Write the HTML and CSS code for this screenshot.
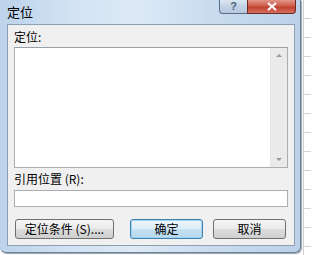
FILE: index.html
```html
<!DOCTYPE html>
<html>
<head>
<meta charset="utf-8">
<link rel="stylesheet" href="styles.css">
</head>
<body>
<div class="page">
  <div class="dialog">
    <div class="titlebar">
      <span class="title">定位</span>
      <div class="caption-btns">
        <div class="cbtn help">?</div>
        <div class="cbtn close">
          <svg width="12" height="9" viewBox="0 0 12 9"><path d="M2 1 L10 8 M10 1 L2 8" stroke="#fff" stroke-width="2.2" fill="none"/></svg>
        </div>
      </div>
    </div>
    <div class="client">
      <div class="label">定位:</div>
      <div class="listbox">
        <div class="list-area"></div>
        <div class="vscroll">
          <span class="arrow up"></span>
          <span class="arrow down"></span>
        </div>
      </div>
      <div class="label ref">引用位置 (R):</div>
      <div class="input"></div>
      <div class="buttons">
        <div class="btn special">定位条件 (S)....</div>
        <div class="btn default">确定</div>
        <div class="btn">取消</div>
      </div>
    </div>
  </div>
  <div class="sheet"></div>
</div>
</body>
</html>
```

FILE: styles.css
```css
html, body {
  margin: 0;
  padding: 0;
}
body {
  width: 311px;
  height: 255px;
  overflow: hidden;
  background: #ffffff;
  font-family: "Noto Sans CJK SC", "Liberation Sans", sans-serif;
  font-size: 12px;
  color: #000;
}
.page {
  display: flex;
  width: 311px;
  height: 255px;
}
.dialog {
  width: 300px;
  height: 252px;
  flex: none;
  background: linear-gradient(90deg, #bcd3eb 0%, #d3e3f3 25%, #dde9f6 45%, #c9dcef 70%, #bcd1e9 100%);
  border-right: 1px solid #6c7d90;
  border-bottom: 1px solid #6c7d90;
  border-radius: 0 0 6px 6px;
  box-shadow: 1px 1px 1px #9aa5b0;
  display: flex;
  flex-direction: column;
}
.titlebar {
  height: 24px;
  display: flex;
  align-items: flex-start;
  padding-left: 7px;
  padding-right: 4px;
}
.title {
  font-size: 13px;
  line-height: 14px;
  margin-top: 5px;
}
.caption-btns {
  margin-left: auto;
  display: flex;
}
.cbtn {
  height: 13px;
  display: flex;
  align-items: center;
  justify-content: center;
  border: 1px solid #5b6d82;
  border-top: none;
}
.help {
  width: 27px;
  border-radius: 0 0 0 4px;
  border-right: none;
  background: linear-gradient(180deg, #dbe6f2 0%, #c3d3e5 50%, #b5c8de 100%);
  color: #4d5f73;
  font-family: "Liberation Sans", sans-serif;
  font-size: 11px;
  font-weight: bold;
  line-height: 13px;
}
.close {
  width: 47px;
  border-radius: 0 0 4px 0;
  border-color: #6b2b24;
  background: linear-gradient(180deg, #e1968a 0%, #cf5b49 45%, #c0412e 55%, #d4705e 100%);
}
.client {
  margin: 0 5px 6px 7px;
  flex: 1;
  background: #f0f0f0;
  border: 1px solid #8e9fb3;
  padding: 4px 6px 0 6px;
  display: flex;
  flex-direction: column;
}
.label {
  height: 18px;
  line-height: 16px;
}
.listbox {
  height: 119px;
  border: 1px solid #abadb3;
  border-top-color: #9a9ea6;
  background: #fff;
  display: flex;
}
.list-area {
  flex: 1;
}
.vscroll {
  width: 16px;
  background: #eaeaea;
  border-left: 1px solid #e6e6e6;
  display: flex;
  flex-direction: column;
  justify-content: space-between;
  align-items: center;
  padding: 6px 0;
}
.arrow {
  width: 0;
  height: 0;
  border-left: 3px solid transparent;
  border-right: 3px solid transparent;
}
.arrow.up {
  border-bottom: 3px solid #9a9a9a;
}
.arrow.down {
  border-top: 3px solid #9a9a9a;
}
.ref {
  margin-top: 3px;
}
.input {
  height: 15px;
  border: 1px solid #abadb3;
  background: #fff;
  margin-top: 1px;
}
.buttons {
  display: flex;
  margin-top: 12px;
  padding-left: 1px;
}
.btn {
  width: 71px;
  height: 18px;
  border: 1px solid #707070;
  border-radius: 3px;
  background: linear-gradient(180deg, #f4f4f4 0%, #ebebeb 48%, #dcdcdc 52%, #cfcfcf 100%);
  display: flex;
  align-items: center;
  justify-content: center;
  line-height: 16px;
}
.btn.special {
  width: 97px;
  margin-right: 16px;
}
.btn.default {
  border-color: #3c7fb1;
  background: linear-gradient(180deg, #eef6fb 0%, #dcecf7 48%, #c5e0f1 52%, #b7d8ee 100%);
  box-shadow: inset 0 0 0 1px #a7d5f0;
  margin-right: 10px;
}
.sheet {
  flex: 1;
  margin-left: 2px;
  background: repeating-linear-gradient(180deg, #ffffff 0px, #ffffff 18px, #d4d4d4 18px, #d4d4d4 19px);
  border-left: 1px solid #d0d0d0;
}
```
